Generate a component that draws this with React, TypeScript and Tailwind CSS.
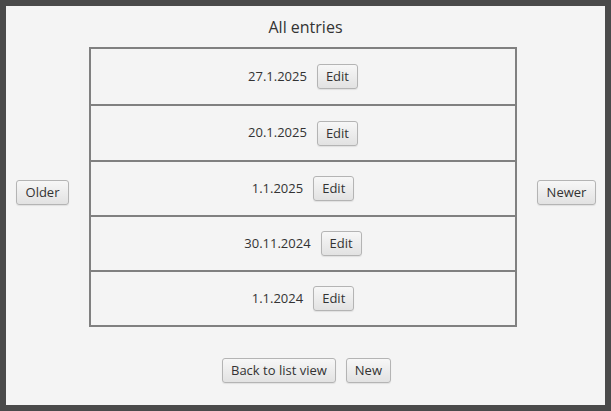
const entries = [
  { date: '27.1.2025', h: 'h-[57px] border-b-2' },
  { date: '20.1.2025', h: 'h-[56px] border-b-2' },
  { date: '1.1.2025', h: 'h-[55px] border-b-2' },
  { date: '30.11.2024', h: 'h-[55px] border-b-2' },
  { date: '1.1.2024', h: 'h-[53px]' },
];

const Btn = ({ label, className = '' }: { label: string; className?: string }) => (
  <button
    className={`h-[25px] px-[8px] rounded-[3px] border border-[#b4b4b4] bg-gradient-to-b from-[#f7f7f7] to-[#e2e2e2] text-[13px] leading-none text-[#333] shadow-[0_1px_1px_rgba(0,0,0,0.08)] ${className}`}
  >
    {label}
  </button>
);

export default function App() {
  return (
    <div
      className="w-[611px] h-[411px] border-[6px] border-[#4a4a4a] bg-[#f4f4f4] flex flex-col text-[#333]"
      style={{ fontFamily: '"Open Sans", "Noto Sans", sans-serif' }}
    >
      {/* Title */}
      <div className="h-[41px] flex items-center justify-center text-[16px] pt-[1px]">All entries</div>

      {/* Middle */}
      <div className="flex items-start pl-[10px] pr-[9px]">
        <Btn label="Older" className="mt-[133px] w-[53px]" />
        <div className="ml-[20px] w-[428px] border-2 border-[#808080]">
          {entries.map((e) => (
            <div
              key={e.date}
              className={`${e.h} border-[#808080] flex items-center justify-center gap-[10px] text-[13px]`}
            >
              <span>{e.date}</span>
              <Btn label="Edit" />
            </div>
          ))}
        </div>
        <Btn label="Newer" className="ml-[20px] mt-[133px] w-[59px]" />
      </div>

      {/* Bottom */}
      <div className="flex justify-center gap-[10px] mt-[31px] pl-[2px]">
        <Btn label="Back to list view" />
        <Btn label="New" />
      </div>
    </div>
  );
}
